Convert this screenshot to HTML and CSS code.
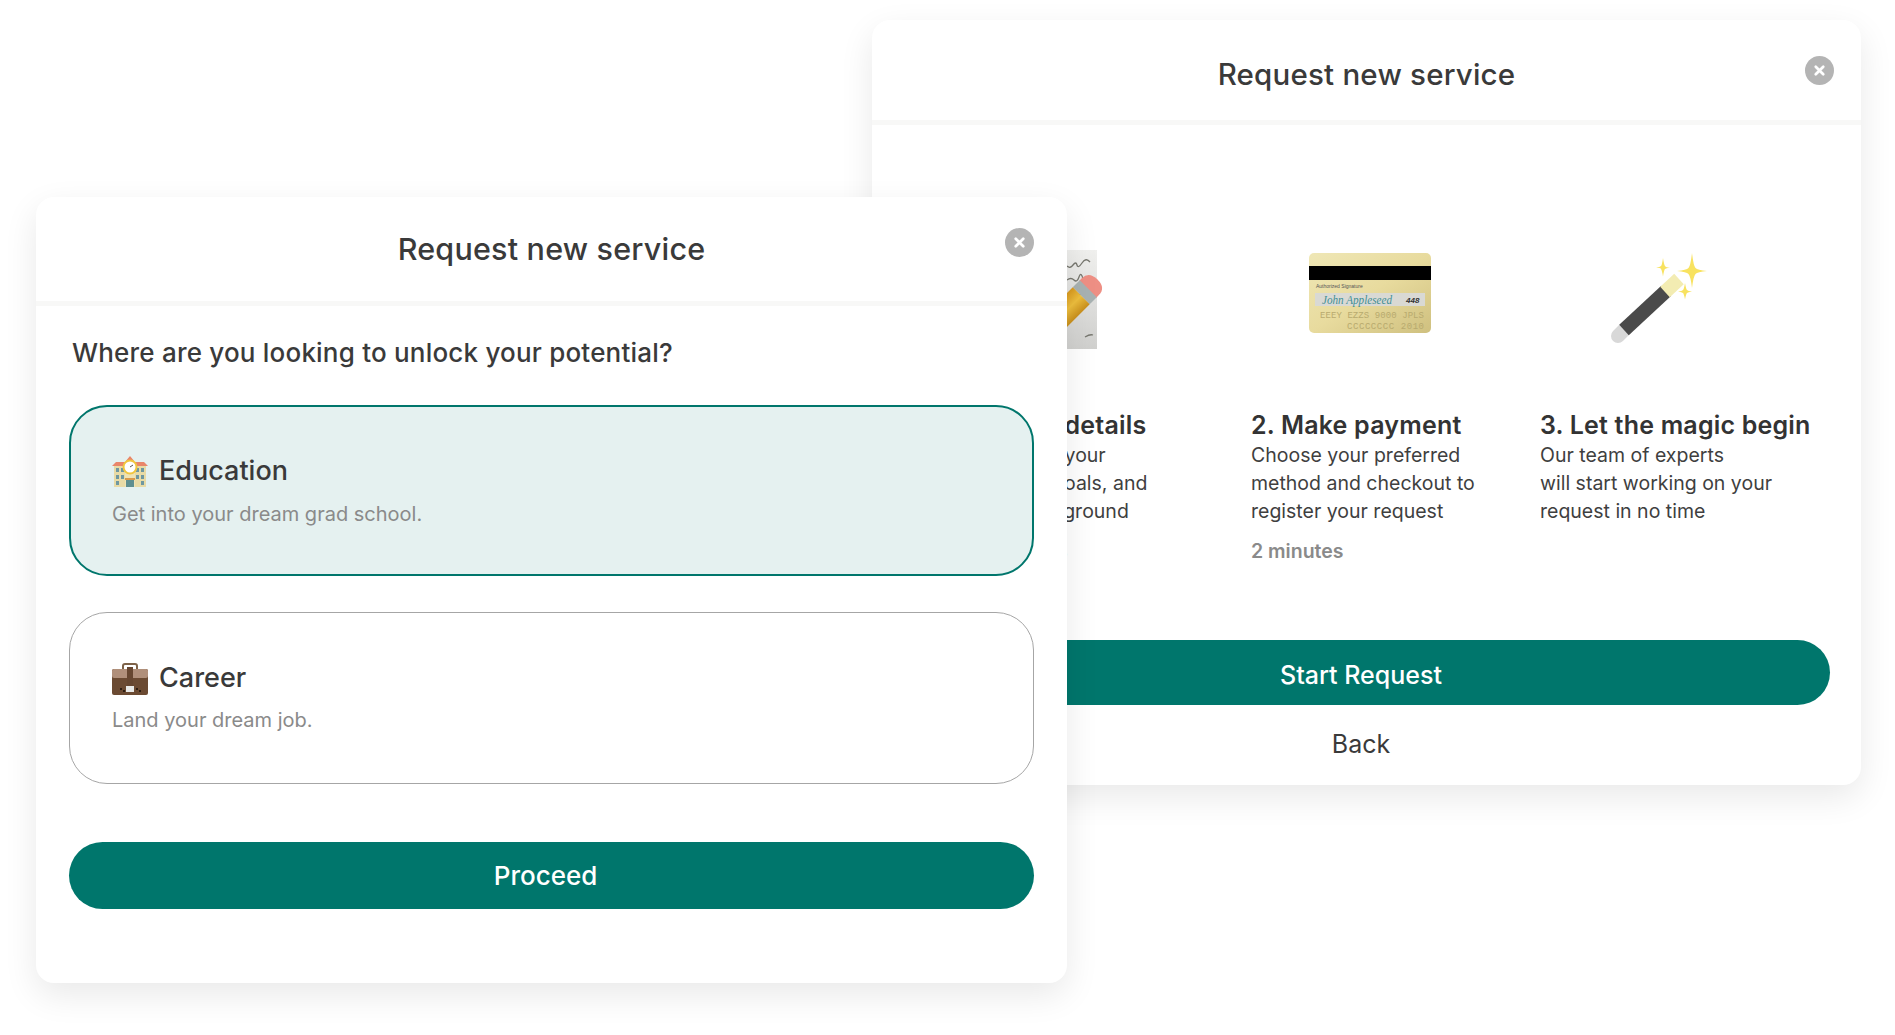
FILE: index.html
```html
<!DOCTYPE html>
<html lang="en">
<head>
<meta charset="utf-8">
<title>Request new service</title>
<link rel="stylesheet" href="styles.css">
</head>
<body>
<main class="canvas">
  <section class="modal modal-back">
    <header class="modal-head">
      <h2 class="modal-title">Request new service</h2>
      <button class="close" aria-label="Close"><svg viewBox="0 0 12 12" class="close-x"><path d="M3 3l6 6M9 3l-6 6"/></svg></button>
    </header>
    <div class="steps">
      <article class="step">
        <div class="step-art art-memo">
          <svg width="110" height="102" viewBox="0 0 110 102">
            <defs>
              <linearGradient id="memo" x1="0" y1="0" x2="0" y2="1"><stop offset="0" stop-color="#f0f0ee"/><stop offset="1" stop-color="#d0d0ce"/></linearGradient>
              <linearGradient id="wood" x1="0" y1="0" x2="1" y2="0"><stop offset="0" stop-color="#d99a1f"/><stop offset=".5" stop-color="#eebf3e"/><stop offset="1" stop-color="#c98f1c"/></linearGradient>
            </defs>
            <rect x="4" y="1" width="92" height="99" fill="url(#memo)"/>
            <path d="M66 17q3 3 6-1t4 0 5-2 8-1M66 31q4-3 7 0t5-3 4 2 5-1M70 46q4-3 7-1t5-3M84 88q5-3 8-2" fill="none" stroke="#77776f" stroke-width="1.300"/>
            <g transform="translate(-4 -1) rotate(45 92 40)">
              <path d="M80 42v-4q0-10 12-10t12 10v4z" fill="#ee8f84"/>
              <rect x="80" y="41" width="24" height="10" fill="#a8b2b2"/>
              <rect x="80" y="51" width="24" height="70" fill="url(#wood)"/>
            </g>
          </svg>
        </div>
        <h3 class="step-title">1. Share details</h3>
        <p class="step-text">Provide us your<br>interests, goals, and<br>study background</p>
        <p class="step-time">20 minutes</p>
      </article>
      <article class="step">
        <div class="step-art art-card">
          <svg width="125" height="82" viewBox="0 0 125 82">
            <defs><linearGradient id="gold" x1="0" y1="0" x2="1" y2="1"><stop offset="0" stop-color="#efe7b6"/><stop offset=".5" stop-color="#e8db9e"/><stop offset="1" stop-color="#cfc07f"/></linearGradient></defs>
            <rect x="1" y="0" width="122" height="80" rx="5" fill="url(#gold)"/>
            <rect x="1" y="13" width="122" height="14" fill="#000"/>
            <text x="8" y="35" class="card-tiny">Authorized Signature</text>
            <rect x="7" y="40" width="110" height="13" fill="#d9d9d4"/>
            <text x="14" y="51" class="card-sign" textLength="70" lengthAdjust="spacingAndGlyphs">John Appleseed</text>
            <text x="98" y="50" class="card-cvv">448</text>
            <text x="12" y="65" class="card-num" textLength="104">EEEY EZZS 9000 JPLS</text>
            <text x="39" y="76" class="card-num" textLength="77">CCCCCCCC 2010</text>
          </svg>
        </div>
        <h3 class="step-title">2. Make payment</h3>
        <p class="step-text">Choose your preferred<br>method and checkout to<br>register your request</p>
        <p class="step-time">2 minutes</p>
      </article>
      <article class="step">
        <div class="step-art art-wand">
          <svg width="100" height="92" viewBox="0 0 100 92">
            <path d="M8 83l8-8" stroke="#d8d8d8" stroke-width="14" stroke-linecap="round" fill="none"/>
            <path d="M14 77L56 38" stroke="#4a4a4a" stroke-width="14" fill="none"/>
            <path d="M55 39L69 26" stroke="#f3ecb2" stroke-width="14" fill="none"/>
            <path d="M82 0q1.500 13 3.500 15t11.500 3q-9.500 1-11.500 3t-3.500 14q-1.500-12-3.500-14t-11.500-3q9.500-1 11.500-3t3.500-15z" fill="#f8e25f"/>
            <path d="M53 5q1 6.500 2 8t5 1.500q-4 .5-5 1.500t-2 7.500q-1-6-2-7.500t-5-1.500q4-.5 5-1.500t2-8z" fill="#f8e25f"/>
            <path d="M75 30q1 6 2 7t5 1.500q-4 .5-5 1.500t-2 6.500q-1-5.500-2-6.500t-5-1.500q4-.5 5-1.500t2-7z" fill="#f8e25f"/>
          </svg>
        </div>
        <h3 class="step-title">3. Let the magic begin</h3>
        <p class="step-text">Our team of experts<br>will start working on your<br>request in no time</p>
      </article>
    </div>
    <div class="back-actions">
      <button class="btn btn-start">Start Request</button>
      <button class="link-back">Back</button>
    </div>
  </section>

  <section class="modal modal-front">
    <header class="modal-head">
      <h2 class="modal-title">Request new service</h2>
      <button class="close" aria-label="Close"><svg viewBox="0 0 12 12" class="close-x"><path d="M3 3l6 6M9 3l-6 6"/></svg></button>
    </header>
    <div class="front-body">
      <h3 class="question">Where are you looking to unlock your potential?</h3>
      <div class="option option-selected">
        <div class="option-head">
          <svg class="emoji" width="36" height="33" viewBox="0 0 36 33">
            <rect x="2" y="9" width="32" height="23" fill="#e8dba6"/>
            <path d="M0 11l4-4h9l5-6 5 6h9l4 4z" fill="#e9866a"/>
            <g fill="#6f98a0"><rect x="4" y="13" width="3" height="4"/><rect x="9" y="13" width="3" height="4"/><rect x="24" y="13" width="3" height="4"/><rect x="29" y="13" width="3" height="4"/><rect x="4" y="20" width="3" height="4"/><rect x="9" y="20" width="3" height="4"/><rect x="24" y="20" width="3" height="4"/><rect x="29" y="20" width="3" height="4"/><rect x="4" y="26" width="3" height="4"/><rect x="29" y="26" width="3" height="4"/></g>
            <rect x="13" y="6" width="10" height="26" fill="#efe3b4"/>
            <circle cx="18" cy="12" r="6.500" fill="#fff" stroke="#f0c63f" stroke-width="2"/>
            <path d="M18 12l3-2" stroke="#555" stroke-width="1"/>
            <rect x="14" y="25" width="8" height="7" fill="#5f8f90"/>
            <rect x="13" y="23" width="10" height="2" fill="#d99a4a"/>
          </svg>
          <span class="option-name">Education</span>
        </div>
        <p class="option-sub">Get into your dream grad school.</p>
      </div>
      <div class="option">
        <div class="option-head">
          <svg class="emoji" width="36" height="33" viewBox="0 0 36 33">
            <path d="M11 8V4q0-2 2-2h10q2 0 2 2v4" fill="none" stroke="#7d6248" stroke-width="2"/>
            <rect x="0" y="7" width="36" height="26" rx="2" fill="#6b4a32"/>
            <rect x="0" y="7" width="36" height="9" rx="2" fill="#b08f7a"/>
            <rect x="15" y="5" width="6" height="20" fill="#664630"/>
            <rect x="14" y="24" width="8" height="6" fill="#e8e8e6"/>
            <g fill="#2d1c10"><rect x="8" y="26" width="2" height="2"/><rect x="11" y="28" width="2" height="2"/><rect x="24" y="26" width="2" height="2"/><rect x="27" y="28" width="2" height="2"/></g>
          </svg>
          <span class="option-name">Career</span>
        </div>
        <p class="option-sub">Land your dream job.</p>
      </div>
      <button class="btn btn-proceed">Proceed</button>
    </div>
  </section>
</main>
</body>
</html>
```

FILE: styles.css
```css
* { box-sizing: border-box; }
html, body { margin: 0; height: 100%; background: #fff; overflow: hidden; }
body { font-family: "Inter", "Open Sans", sans-serif; color: #3a3a3a; }
h2, h3, p { margin: 0; }
button { font-family: inherit; border: 0; background: none; padding: 0; color: inherit; }

.canvas { position: relative; width: 1895px; height: 1035px; }

.modal {
  position: absolute;
  background: #fff;
  border-radius: 18px;
  box-shadow: 0 12px 34px rgba(0, 0, 0, 0.09);
}
.modal-back { left: 872px; top: 20px; width: 989px; height: 765px; }
.modal-front { left: 36px; top: 197px; width: 1031px; height: 786px; }

.modal-head {
  position: relative;
  display: flex;
  align-items: center;
  justify-content: center;
  border-bottom: 5px solid #f8f8f7;
}
.modal-back .modal-head { height: 105px; padding-top: 8px; }
.modal-front .modal-head { height: 109px; padding-top: 0; }
.modal-title { font-size: 30.5px; font-weight: 500; line-height: 40px; letter-spacing: 0.2px; }
.modal-back .modal-title { font-size: 29.5px; }

.close {
  position: absolute;
  width: 29px;
  height: 29px;
  border-radius: 50%;
  background: #b4b4b4;
  display: flex;
  align-items: center;
  justify-content: center;
}
.modal-back .close { right: 27px; top: 36px; }
.modal-front .close { right: 33px; top: 31px; }
.close-x { width: 15px; height: 15px; fill: none; stroke: #fff; stroke-width: 2.2; stroke-linecap: round; }

/* back modal */
.steps {
  display: grid;
  grid-template-columns: 289px 289px 289px;
  padding: 124px 0 0 90px;
}
.step-art { height: 102px; display: flex; align-items: flex-start; }
.art-memo { padding-left: 39px; }
.art-card { padding: 4px 0 0 57px; }
.art-wand { padding: 4px 0 0 70px; }
.step-title { margin-top: 58px; font-size: 25px; font-weight: 600; line-height: 32px; letter-spacing: 0.2px; color: #333; }
.step-text { font-size: 19.5px; line-height: 28px; color: #3f3f3f; margin-top: 0; }
.step-time { margin-top: 12px; font-size: 19.5px; line-height: 28px; font-weight: 600; color: #8a8a8a; }

.card-tiny { font: 5px "Liberation Sans", sans-serif; fill: #555; }
.card-sign { font: italic 12px "Liberation Serif", serif; fill: #3f8f95; }
.card-cvv { font: italic 700 8px "Liberation Sans", sans-serif; fill: #333; }
.card-num { font: 9px "Liberation Mono", monospace; fill: #b8aa6e; }

.back-actions {
  display: flex;
  flex-direction: column;
  margin-top: 75px;
  padding: 0 31px 0 20px;
}
.btn {
  display: block;
  background: #00766c;
  color: #fff;
  font-weight: 500;
  border-radius: 34px;
}
.btn-start { height: 65px; font-size: 25px; padding-top: 4px; }
.link-back { margin-top: 19px; font-size: 25px; line-height: 40px; }

/* front modal */
.front-body { padding: 0 33px; display: flex; flex-direction: column; }
.question { margin: 29px 0 0 3px; font-size: 26px; font-weight: 500; line-height: 36px; letter-spacing: 0.2px; }
.option {
  height: 172px;
  padding: 47px 41px 0 42px;
  border: 1.5px solid #a6a6a6;
  border-radius: 38px;
}
.option-selected { height: 171px; margin-top: 34px; padding-left: 41px; padding-top: 46px; background: #e5f1f0; border: 2px solid #00766c; }
.option + .option { margin-top: 36px; }
.option-head { display: flex; align-items: center; gap: 11px; height: 36px; }
.option-name { font-size: 27px; font-weight: 500; line-height: 36px; }
.option-sub { margin-top: 11px; font-size: 20px; line-height: 28px; color: #8a8a8a; }
.option + .option .option-sub { margin-top: 10px; }
.btn-proceed { height: 67px; margin-top: 58px; font-size: 26px; padding-right: 12px; }
```
